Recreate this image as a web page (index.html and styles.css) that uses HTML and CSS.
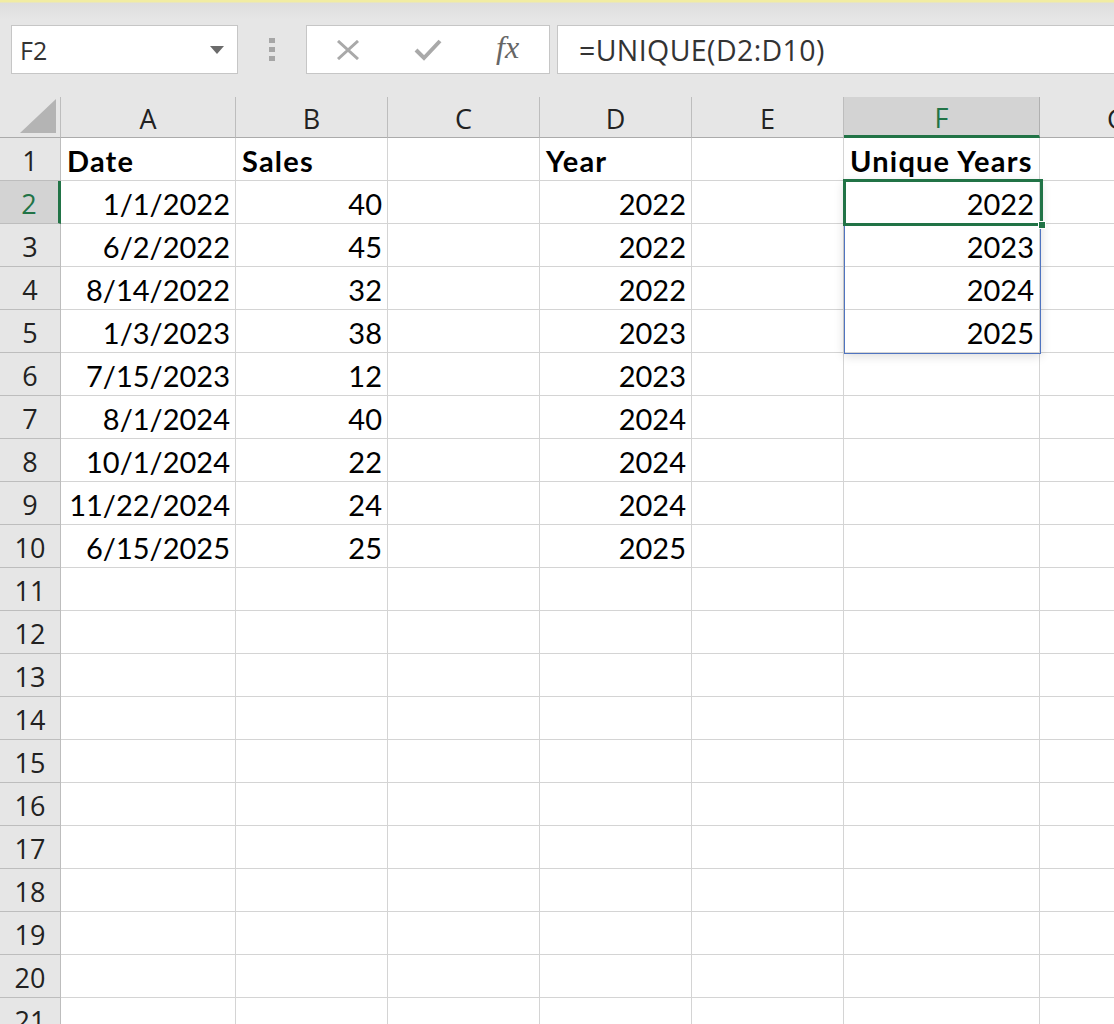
FILE: index.html
```html
<!DOCTYPE html>
<html>
<head>
<meta charset="utf-8">
<link rel="stylesheet" href="styles.css">
</head>
<body>
<div class="app">
  <div class="toolbar">
    <div class="namebox">
      <span class="name">F2</span>
      <svg class="caret" width="14" height="8" viewBox="0 0 14 8"><path d="M0 0 H14 L7 8 Z" fill="#6b6b6b"/></svg>
    </div>
    <div class="grip"><span></span><span></span><span></span></div>
    <div class="fxbox">
      <svg class="ico" width="26" height="20" viewBox="0 0 26 20"><path d="M3 1 L23 19 M23 1 L3 19" stroke="#a9a9a9" stroke-width="3" fill="none"/></svg>
      <svg class="ico" width="28" height="22" viewBox="0 0 28 22"><path d="M2 11 L10 19 L26 2" stroke="#a9a9a9" stroke-width="4" fill="none"/></svg>
      <span class="fx">fx</span>
    </div>
    <div class="formula">=UNIQUE(D2:D10)</div>
  </div>

  <div class="sheet">
    <div class="grid">
      <div class="corner"><svg width="36" height="34" viewBox="0 0 36 34"><path d="M0 34 H36 V0 Z" fill="#b4b4b4"/></svg></div>
      <div class="ch">A</div><div class="ch">B</div><div class="ch">C</div><div class="ch">D</div><div class="ch">E</div><div class="ch sel">F</div><div class="ch ch-g">G</div>

      <div class="rh">1</div><div class="c b">Date</div><div class="c b">Sales</div><div class="c"></div><div class="c b">Year</div><div class="c"></div><div class="c b">Unique Years</div><div class="c"></div>
      <div class="rh rsel">2</div><div class="c n">1/1/2022</div><div class="c n">40</div><div class="c"></div><div class="c n">2022</div><div class="c"></div><div class="c n">2022</div><div class="c"></div>
      <div class="rh">3</div><div class="c n">6/2/2022</div><div class="c n">45</div><div class="c"></div><div class="c n">2022</div><div class="c"></div><div class="c n">2023</div><div class="c"></div>
      <div class="rh">4</div><div class="c n">8/14/2022</div><div class="c n">32</div><div class="c"></div><div class="c n">2022</div><div class="c"></div><div class="c n">2024</div><div class="c"></div>
      <div class="rh">5</div><div class="c n">1/3/2023</div><div class="c n">38</div><div class="c"></div><div class="c n">2023</div><div class="c"></div><div class="c n">2025</div><div class="c"></div>
      <div class="rh">6</div><div class="c n">7/15/2023</div><div class="c n">12</div><div class="c"></div><div class="c n">2023</div><div class="c"></div><div class="c"></div><div class="c"></div>
      <div class="rh">7</div><div class="c n">8/1/2024</div><div class="c n">40</div><div class="c"></div><div class="c n">2024</div><div class="c"></div><div class="c"></div><div class="c"></div>
      <div class="rh">8</div><div class="c n">10/1/2024</div><div class="c n">22</div><div class="c"></div><div class="c n">2024</div><div class="c"></div><div class="c"></div><div class="c"></div>
      <div class="rh">9</div><div class="c n">11/22/2024</div><div class="c n">24</div><div class="c"></div><div class="c n">2024</div><div class="c"></div><div class="c"></div><div class="c"></div>
      <div class="rh">10</div><div class="c n">6/15/2025</div><div class="c n">25</div><div class="c"></div><div class="c n">2025</div><div class="c"></div><div class="c"></div><div class="c"></div>
      <div class="rh">11</div><div class="c"></div><div class="c"></div><div class="c"></div><div class="c"></div><div class="c"></div><div class="c"></div><div class="c"></div>
      <div class="rh">12</div><div class="c"></div><div class="c"></div><div class="c"></div><div class="c"></div><div class="c"></div><div class="c"></div><div class="c"></div>
      <div class="rh">13</div><div class="c"></div><div class="c"></div><div class="c"></div><div class="c"></div><div class="c"></div><div class="c"></div><div class="c"></div>
      <div class="rh">14</div><div class="c"></div><div class="c"></div><div class="c"></div><div class="c"></div><div class="c"></div><div class="c"></div><div class="c"></div>
      <div class="rh">15</div><div class="c"></div><div class="c"></div><div class="c"></div><div class="c"></div><div class="c"></div><div class="c"></div><div class="c"></div>
      <div class="rh">16</div><div class="c"></div><div class="c"></div><div class="c"></div><div class="c"></div><div class="c"></div><div class="c"></div><div class="c"></div>
      <div class="rh">17</div><div class="c"></div><div class="c"></div><div class="c"></div><div class="c"></div><div class="c"></div><div class="c"></div><div class="c"></div>
      <div class="rh">18</div><div class="c"></div><div class="c"></div><div class="c"></div><div class="c"></div><div class="c"></div><div class="c"></div><div class="c"></div>
      <div class="rh">19</div><div class="c"></div><div class="c"></div><div class="c"></div><div class="c"></div><div class="c"></div><div class="c"></div><div class="c"></div>
      <div class="rh">20</div><div class="c"></div><div class="c"></div><div class="c"></div><div class="c"></div><div class="c"></div><div class="c"></div><div class="c"></div>
      <div class="rh">21</div><div class="c"></div><div class="c"></div><div class="c"></div><div class="c"></div><div class="c"></div><div class="c"></div><div class="c"></div>
    </div>
    <div class="spill"></div>
    <div class="active"><span class="handle"></span></div>
  </div>
</div>
</body>
</html>
```

FILE: styles.css
```css
* { box-sizing: border-box; }
html, body { margin: 0; padding: 0; }
body {
  width: 1114px;
  height: 1024px;
  overflow: hidden;
  background: #ffffff;
  font-family: "Open Sans", "Noto Sans", sans-serif;
}
.app { width: 1114px; }

.toolbar {
  height: 97px;
  background: linear-gradient(#f1eca3 0, #f1eca3 2px, #dedede 3px, #e6e6e6 20px, #e6e6e6 100%);
  display: flex;
  align-items: flex-start;
  padding: 25px 0 0 11px;
}
.namebox {
  width: 227px;
  height: 49px;
  background: #fff;
  border: 1px solid #c6c6c6;
  display: flex;
  align-items: center;
  justify-content: space-between;
  padding: 0 13px 0 8px;
}
.name { font-size: 25px; color: #333; }
.grip {
  width: 68px;
  height: 49px;
  display: flex;
  flex-direction: column;
  align-items: center;
  justify-content: center;
  gap: 4px;
}
.grip span { width: 6px; height: 5px; background: #a6a6a6; display: block; }
.fxbox {
  width: 244px;
  height: 49px;
  background: #fff;
  border: 1px solid #c6c6c6;
  display: flex;
  align-items: center;
  padding: 0 0 0 28px;
  gap: 53px;
}
.fx {
  font-family: "Liberation Serif", "DejaVu Serif", serif;
  font-style: italic;
  font-size: 32px;
  color: #666;
  margin-left: 1px;
  margin-top: -4px;
}
.formula {
  flex: 1;
  height: 49px;
  margin-left: 7px;
  background: #fff;
  border: 1px solid #c6c6c6;
  border-right: none;
  font-size: 28.5px;
  letter-spacing: 0.4px;
  color: #333;
  display: flex;
  align-items: center;
  padding-left: 21px;
}

.sheet { position: relative; }
.grid {
  display: grid;
  grid-template-columns: 61px 175px 152px 152px 152px 152px 196px 100px;
  grid-template-rows: 41px repeat(21, 43px);
}
.corner {
  background: #e6e6e6;
  border-right: 1px solid #bdbdbd;
  border-bottom: 1px solid #ababab;
  display: flex;
  align-items: flex-end;
  justify-content: flex-end;
  padding: 0 4px 4px 0;
}
.ch {
  background: #e6e6e6;
  border-right: 1px solid #bdbdbd;
  border-bottom: 1px solid #ababab;
  font-size: 27px;
  color: #222;
  display: flex;
  align-items: center;
  justify-content: center;
  padding-top: 2px;
}
.ch.sel {
  background: #d3d3d3;
  color: #217346;
  border-bottom: 3px solid #217346;
  border-right-color: #b0b0b0;
}
.ch-g { justify-content: flex-start; padding-left: 67px; }
.rh {
  background: #e6e6e6;
  border-right: 1px solid #bdbdbd;
  border-bottom: 1px solid #bdbdbd;
  font-size: 27px;
  color: #222;
  display: flex;
  align-items: center;
  justify-content: center;
  padding-top: 3px;
}
.rh.rsel {
  background: #d3d3d3;
  color: #217346;
  border-right: 3px solid #217346;
}
.c {
  border-right: 1px solid #d4d4d4;
  border-bottom: 1px solid #d4d4d4;
  font-family: "Lato", "Carlito", sans-serif;
  font-size: 29px;
  color: #000;
  display: flex;
  align-items: flex-end;
  padding: 0 5px 5px 6px;
  line-height: 1;
  white-space: nowrap;
}
.c.b { font-weight: 700; letter-spacing: 1.2px; }
.c.n { justify-content: flex-end; }

.spill {
  position: absolute;
  left: 844px;
  top: 84px;
  width: 197px;
  height: 173px;
  border: 1px solid #4f74c0;
  box-shadow: 0 2px 10px rgba(0,0,0,0.15);
  pointer-events: none;
}
.active {
  position: absolute;
  left: 843px;
  top: 82px;
  width: 200px;
  height: 47px;
  border: 3px solid #217346;
}
.handle {
  position: absolute;
  right: -6px;
  bottom: -6px;
  width: 8px;
  height: 8px;
  background: #217346;
  border: 1px solid #fff;
}
```
